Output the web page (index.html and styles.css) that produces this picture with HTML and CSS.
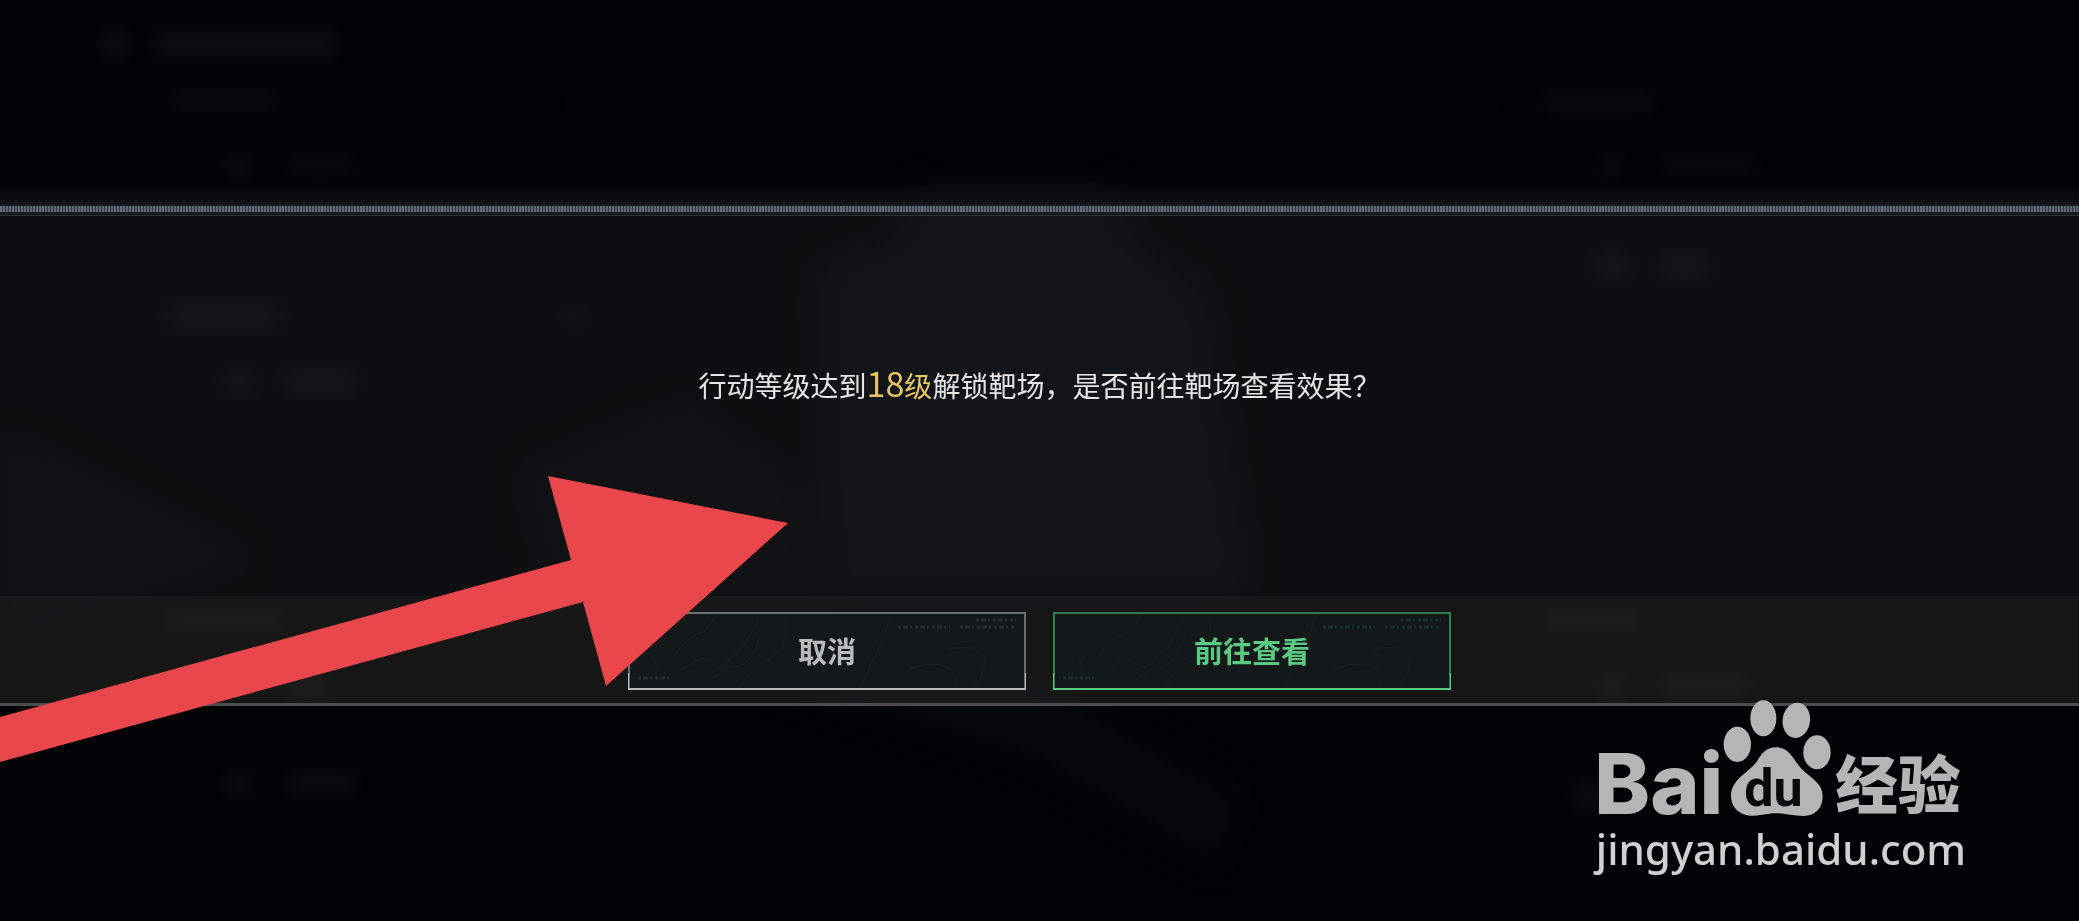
FILE: index.html
```html
<!DOCTYPE html>
<html lang="zh-CN">
<head>
<meta charset="utf-8">
<title>靶场</title>
<link rel="stylesheet" href="styles.css">
</head>
<body>
<svg class="scene" viewBox="0 0 2079 921" preserveAspectRatio="xMidYMid slice" aria-hidden="true">
  <defs>
    <filter id="soft" x="-50%" y="-50%" width="200%" height="200%"><feGaussianBlur stdDeviation="9"/></filter>
    <filter id="wide" x="-50%" y="-50%" width="200%" height="200%"><feGaussianBlur stdDeviation="18"/></filter>
  </defs>
  <g filter="url(#wide)" fill="#27343a" opacity=".36">
    <path d="M820 270 900 245 920 190H1110L1130 245 1200 290 1245 590H830Z"/>
    <path d="M520 470 690 400 800 480 820 640 1060 690 1250 800 1220 870 1030 760 560 620Z" opacity=".4"/>
    <path d="M0 430 260 560 0 640Z" opacity=".4"/>
  </g>
  <g filter="url(#soft)" fill="#fff" opacity=".05">
    <rect x="100" y="30" width="28" height="28"/><rect x="154" y="30" width="182" height="28"/>
    <rect x="168" y="90" width="112" height="20" opacity=".8"/><rect x="225" y="156" width="28" height="20"/><rect x="286" y="156" width="70" height="18" opacity=".8"/>
    <rect x="565" y="94" width="18" height="18" opacity=".5"/>
    <rect x="225" y="773" width="28" height="22"/><rect x="286" y="773" width="70" height="20"/>
    <rect x="1482" y="92" width="18" height="18" opacity=".5"/><rect x="1542" y="92" width="112" height="20" opacity=".8"/>
    <rect x="1597" y="157" width="28" height="20" opacity=".8"/><rect x="1660" y="157" width="98" height="18" opacity=".7"/>
    <rect x="1570" y="780" width="40" height="30" opacity=".8"/>
  </g>
  <g filter="url(#soft)" fill="#fff" opacity=".1">
    <rect x="168" y="306" width="112" height="20"/><rect x="225" y="371" width="28" height="20"/><rect x="286" y="371" width="70" height="20"/>
    <rect x="565" y="308" width="18" height="18" opacity=".5"/>
    <rect x="168" y="610" width="112" height="20"/><rect x="286" y="678" width="45" height="18"/>
    <rect x="1597" y="255" width="28" height="22"/><rect x="1660" y="257" width="48" height="20"/>
    <rect x="1542" y="610" width="100" height="20"/><rect x="1597" y="675" width="28" height="20"/><rect x="1660" y="675" width="90" height="18"/>
  </g>
</svg>

<main class="stage">
  <section class="dialog" role="dialog" aria-labelledby="dialog-message">
    <div class="dialog-rail"></div>
    <div class="dialog-body">
      <p class="message" id="dialog-message">行动等级达到<em class="level"><span class="number">18</span>级</em>解锁靶场，是否前往靶场查看效果？</p>
    </div>
    <div class="dialog-footer">
      <button class="action action-cancel" type="button">
        <svg class="action-pattern" viewBox="0 0 398 78" aria-hidden="true"><use href="#contours"/></svg>
        <span class="action-label">取消</span>
      </button>
      <button class="action action-confirm" type="button">
        <svg class="action-pattern" viewBox="0 0 398 78" aria-hidden="true">
          <g id="contours" fill="none" stroke="currentColor">
            <path opacity=".05" d="M20 40q12 8 8 30M45 45q14-20 32-26l12-16M52 58l22-12 18 10 24-22 14-26M80 70q16-14 30-16t22-30M112 76q10-20 28-28 22-12 16-44M232 76l14-30 12-26 4-18M278 60q16-12 40-6 14 8 10 22M318 38q30-8 38 8 2 18-10 28"/>
            <path opacity=".12" stroke-width="3" stroke-dasharray="3 2 5 2 2 3" d="M348 8h40M270 15h52M332 15h54M10 66h32"/>
          </g>
        </svg>
        <span class="action-label">前往查看</span>
      </button>
    </div>
  </section>
</main>

<svg class="pointer" viewBox="0 0 788 763" aria-hidden="true">
  <path d="M0 717 571 560 548 476 788 523 606 686 583 602 0 762Z"/>
</svg>

<a class="watermark" href="#jingyan" aria-label="Baidu 经验">
  <svg class="watermark-logo" viewBox="102 60 1122 360" aria-hidden="true">
    <ellipse cx="532" cy="196" rx="41" ry="53"/>
    <ellipse cx="610" cy="118" rx="39" ry="54"/>
    <ellipse cx="709" cy="124" rx="41" ry="53" transform="rotate(8 709 124)"/>
    <ellipse cx="771" cy="220" rx="41" ry="51"/>
    <path d="M650 205C615 205 605 226 590 248C568 280 513 300 513 350C513 390 545 411 580 410C610 409 625 403 650 403C678 403 695 411 732 411C765 411 788 388 788 352C788 312 755 300 725 270C700 243 690 205 650 205Z"/>
    <text class="logo-bai" x="103" y="405">Bai</text>
    <text class="logo-du" x="553" y="380">du</text>
    <text class="logo-cn" x="826" y="388">经验</text>
  </svg>
  <span class="watermark-url">jingyan.baidu.com</span>
</a>
</body>
</html>
```
FILE: styles.css
```css
* {
  box-sizing: border-box;
}

body {
  margin: 0;
  min-height: 100vh;
  position: relative;
  overflow: hidden;
  background: #010203;
  color: #e4e4e4;
  font-family: "Noto Sans CJK SC", sans-serif;
}

.scene {
  position: absolute;
  inset: 0;
  width: 100%;
  height: 100%;
}

.stage {
  position: relative;
  min-height: 100vh;
  display: grid;
  grid-template-rows: 182fr auto 215fr;
}

.dialog {
  grid-row: 2;
}

.dialog-rail {
  height: 34px;
  border-bottom: 1px solid #2c2f32;
  background:
    repeating-linear-gradient(90deg, #7c8a9630 0 4px, transparent 4px 40px) 0 24px / 100% 6px no-repeat,
    repeating-linear-gradient(90deg, #5c666f 0 2px, #333b43 2px 3px) 0 24px / 100% 6px no-repeat,
    linear-gradient(#0000, #0d1013 20px, #181d22 24px, #171b1f);
}

.dialog-body {
  min-height: 380px;
  padding: 147px 32px 0;
  background: rgb(22 23 24 / 62%);
}

.message {
  margin: 0;
  font-size: 28px;
  line-height: 40px;
  text-align: center;
}

.level {
  color: #e5c566;
  font-style: normal;
}

.number {
  font-size: 34px;
}

.dialog-footer {
  display: flex;
  justify-content: center;
  gap: 27px;
  padding: 16px 32px 13px;
  border-bottom: 3px solid #4c4c4f;
  background: rgb(32 32 32 / 68%);
}

.action {
  position: relative;
  width: 398px;
  height: 78px;
  padding: 0 0 2px;
  border: 2px solid;
  background: #131819;
  font: bold 29px/40px "Noto Sans CJK SC", sans-serif;
  cursor: pointer;
}

/* brighter lower corners of the frame */
.action::after {
  content: "";
  position: absolute;
  inset: auto -2px -2px;
  height: 15px;
  border: solid;
  border-width: 0 1px 2px;
}

.action-cancel {
  border-color: #6b6e6f;
  color: #b9bbbb;
}

.action-confirm {
  border-color: #327c51;
  color: #5bc884;
}

.action-pattern {
  position: absolute;
  inset: -2px;
  width: 398px;
  height: 78px;
}

.action-label {
  position: relative;
}

.pointer {
  position: absolute;
  top: 0;
  left: 0;
  width: 788px;
  height: 763px;
  fill: #e9474b;
  pointer-events: none;
}

.watermark {
  position: absolute;
  right: 111px;
  bottom: 42px;
  display: flex;
  flex-direction: column;
  align-items: center;
  color: #d0d0d0;
  text-decoration: none;
}

.watermark-logo {
  width: 374px;
  height: 120px;
  overflow: visible;
  fill: #b5b5b5;
}

.logo-bai {
  font: 800 252px Inter, sans-serif;
}

.logo-du {
  fill: #08090a;
  font: bold 156px Roboto, sans-serif;
}

.logo-cn {
  font: 900 188px "Noto Sans CJK SC", sans-serif;
}

.watermark-url {
  font: 500 42px/60px "Noto Sans", "Open Sans", sans-serif;
}
```
